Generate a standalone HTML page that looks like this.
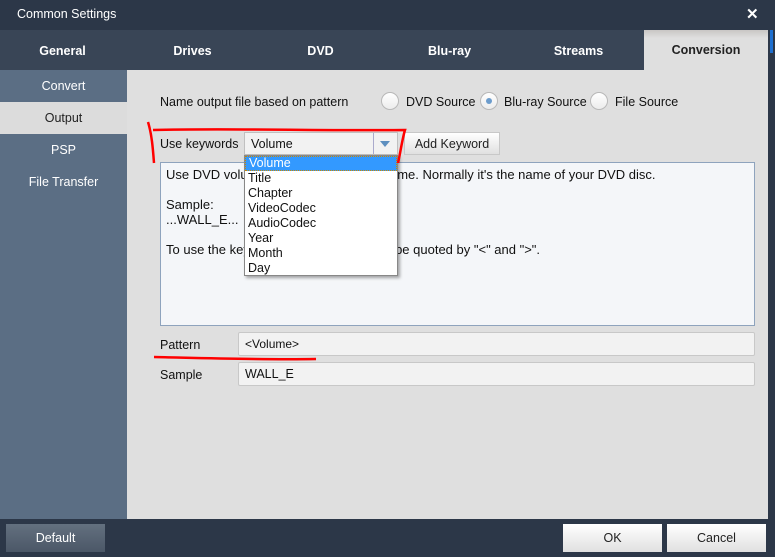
<!DOCTYPE html>
<html><head><style>
*{margin:0;padding:0;box-sizing:border-box}
body{width:775px;height:557px;overflow:hidden;background:#2c3748;font-family:"Liberation Sans",Arial,sans-serif;font-size:12px;color:#111;position:relative}
.a{position:absolute}
.tab{position:absolute;top:30px;height:40px;line-height:43px;text-align:center;color:#fff;font-weight:bold;font-size:12.5px}
.side{position:absolute;left:0;width:127px;height:32px;line-height:33px;text-align:center;color:#fff;font-size:12.5px}
.fld{position:absolute;background:#f2f2f2;border:1px solid #c8c8c8;border-radius:2px;padding-left:6px;line-height:23px}
.radio{position:absolute;width:18px;height:18px;border-radius:50%;border:1px solid #b8b8b8;background:linear-gradient(#fff,#ececec)}
.btn{position:absolute;text-align:center;background:linear-gradient(#fff,#e0e0e0);color:#222;font-size:12.5px}
</style></head><body>
<div class="a" style="left:0;top:0;width:775px;height:30px;background:#2c3748"></div>
<div class="a" style="left:17px;top:7px;color:#fff;font-size:12.5px">Common Settings</div>
<div class="a" style="left:746px;top:5px;color:#fff;font-size:15px;font-weight:bold">✕</div>
<div class="a" style="left:0;top:30px;width:768px;height:40px;background:#394556"></div>
<div class="a" style="left:768px;top:30px;width:7px;height:527px;background:#2c3748"></div>
<div class="a" style="left:770px;top:30px;width:3px;height:23px;background:#1e6fd0"></div>
<div class="tab" style="left:0;width:125px">General</div>
<div class="tab" style="left:130px;width:125px">Drives</div>
<div class="tab" style="left:258px;width:125px">DVD</div>
<div class="tab" style="left:387px;width:125px">Blu-ray</div>
<div class="tab" style="left:516px;width:125px">Streams</div>
<div class="tab" style="left:644px;width:124px;background:linear-gradient(#c9c6c4,#dfdfdf 8px);color:#222;line-height:41px">Conversion</div>
<div class="a" style="left:0;top:70px;width:127px;height:449px;background:#5b6e84"></div>
<div class="a" style="left:127px;top:70px;width:641px;height:449px;background:#dfdfdf"></div>
<div class="side" style="top:70px">Convert</div>
<div class="side" style="top:102px;background:#dcdcdc;color:#222">Output</div>
<div class="side" style="top:134px">PSP</div>
<div class="side" style="top:166px">File Transfer</div>
<div class="a" style="left:160px;top:95px;font-size:12.5px">Name output file based on pattern</div>
<div class="radio" style="left:381px;top:92px"></div><div class="a" style="left:406px;top:95px;font-size:12.5px">DVD Source</div>
<div class="radio" style="left:480px;top:92px"></div><div class="a" style="left:486px;top:98px;width:6px;height:6px;border-radius:50%;background:#6c9ccc"></div><div class="a" style="left:504px;top:95px;font-size:12.5px">Blu-ray Source</div>
<div class="radio" style="left:590px;top:92px"></div><div class="a" style="left:615px;top:95px;font-size:12.5px">File Source</div>
<div class="a" style="left:160px;top:137px;font-size:12.5px">Use keywords</div>
<div class="a" style="left:244px;top:132px;width:154px;height:23px;background:#f2f2f2;border:1px solid #c0c0c0;padding-left:6px;line-height:22px;font-size:12.5px">Volume</div>
<div class="a" style="left:373px;top:133px;width:1px;height:21px;background:#aac"></div>
<div class="a" style="left:380px;top:141px;width:0;height:0;border-left:5px solid transparent;border-right:5px solid transparent;border-top:6px solid #5d8fbf"></div>
<div class="btn" style="left:404px;top:132px;width:96px;height:23px;line-height:22px;border:1px solid #c8c8c8">Add Keyword</div>
<div class="a" style="left:160px;top:162px;width:595px;height:164px;background:#f4f6f9;border:1px solid #8ea3bd;padding:4px 5px;line-height:15px;font-size:13px">Use DVD volume name as output file name. Normally it's the name of your DVD disc.<br><br>Sample:<br>...WALL_E...<br><br>To use the keyword in pattern, it should be quoted by "&lt;" and "&gt;".</div>
<div class="a" style="left:244px;top:155px;width:154px;height:121px;background:#fff;border:1px solid #888;box-shadow:2px 2px 3px rgba(0,0,0,.35);font-size:12.5px;line-height:15px">
<div style="background:#3399ff;color:#fff;padding-left:4px;outline:1px dotted #c80;outline-offset:-1px">Volume</div>
<div style="padding-left:3px">Title<br>Chapter<br>VideoCodec<br>AudioCodec<br>Year<br>Month<br>Day</div></div>
<div class="a" style="left:160px;top:338px;font-size:12.5px">Pattern</div>
<div class="fld" style="left:238px;top:332px;width:517px;height:24px">&lt;Volume&gt;</div>
<div class="a" style="left:160px;top:368px;font-size:12.5px">Sample</div>
<div class="fld" style="left:238px;top:362px;width:517px;height:24px;font-size:12.5px">WALL_E</div>
<svg class="a" style="left:0;top:0" width="775" height="557">
<path d="M148 122 C152 135,153 150,154 163 M153 130 C230 128,320 131,405 130 C402 140,400 155,398 163" stroke="#f00" stroke-width="2.5" fill="none"/>
<path d="M154 357 C200 358,260 360,316 359" stroke="#f00" stroke-width="2.5" fill="none"/>
</svg>
<div class="a" style="left:6px;top:524px;width:99px;height:28px;line-height:29px;text-align:center;color:#fff;font-size:12.5px;background:linear-gradient(#63707f,#4b5767)">Default</div>
<div class="btn" style="left:563px;top:524px;width:99px;height:28px;line-height:29px">OK</div>
<div class="btn" style="left:667px;top:524px;width:99px;height:28px;line-height:29px">Cancel</div>
</body></html>
